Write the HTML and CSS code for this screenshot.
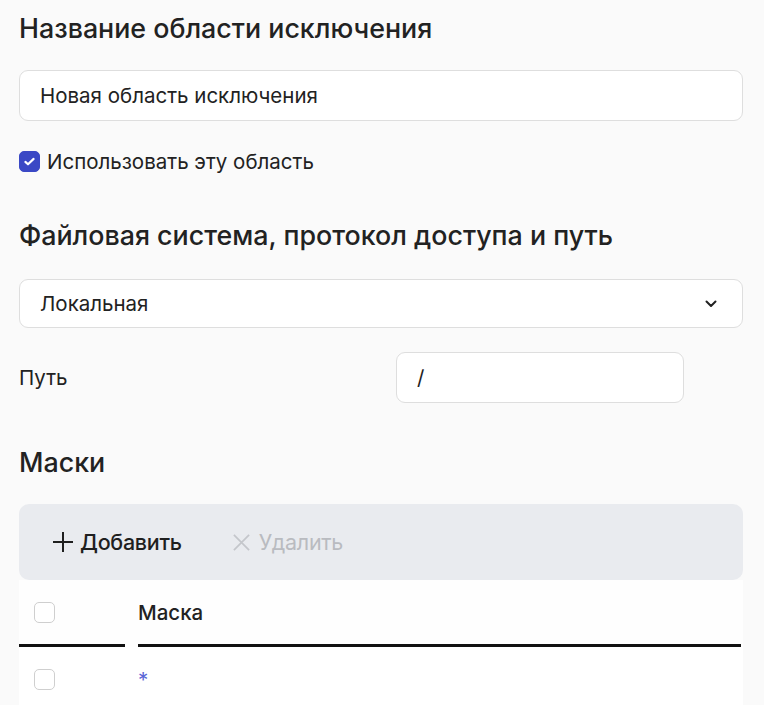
FILE: index.html
```html
<!DOCTYPE html>
<html lang="ru">
<head>
    <meta charset="UTF-8">
    <title>Область исключения</title>
    <link rel="stylesheet" href="styles.css">
</head>
<body>
    <div class="page">
        <h2 class="section-title">Название области исключения</h2>
        <div class="field">
            <input class="text-input" type="text" value="Новая область исключения">
        </div>
        <label class="check-row">
            <span class="checkbox checked">
                <svg viewBox="0 0 20 20" width="15" height="15"><path d="M4.5 10.5l3.5 3.3L15.5 6.5" fill="none" stroke="#fff" stroke-width="2.8" stroke-linecap="round" stroke-linejoin="round"/></svg>
            </span>
            <span class="check-label">Использовать эту область</span>
        </label>

        <h2 class="section-title">Файловая система, протокол доступа и путь</h2>
        <div class="select">
            <span>Локальная</span>
            <svg class="chevron" viewBox="0 0 12 8" width="12" height="8"><path d="M1.5 1.5L6 6l4.5-4.5" fill="none" stroke="#222" stroke-width="2" stroke-linecap="round" stroke-linejoin="round"/></svg>
        </div>
        <div class="path-row">
            <span class="path-label">Путь</span>
            <input class="text-input path-input" type="text" value="/">
        </div>

        <h2 class="section-title">Маски</h2>
        <div class="toolbar">
            <button class="tool-btn">
                <svg viewBox="0 0 22 22" width="22" height="22"><path d="M11 1v20M1 11h20" stroke="#1f1f1f" stroke-width="2" fill="none"/></svg>
                Добавить
            </button>
            <button class="tool-btn disabled">
                <svg viewBox="0 0 20 20" width="19" height="19"><path d="M2 2l16 16M18 2L2 18" stroke="#c4c6cb" stroke-width="1.8" fill="none"/></svg>
                Удалить
            </button>
        </div>

        <div class="table">
            <div class="table-head">
                <div class="cell cell-check"><span class="checkbox"></span></div>
                <div class="cell cell-main">Маска</div>
            </div>
            <div class="table-row">
                <div class="cell cell-check"><span class="checkbox"></span></div>
                <div class="cell cell-main mask-value">*</div>
            </div>
        </div>
    </div>
</body>
</html>
```

FILE: styles.css
```css
* {
    margin: 0;
    padding: 0;
    box-sizing: border-box;
}

body {
    font-family: Inter, 'Noto Sans', sans-serif;
    background: #fafafa;
    color: #222;
    overflow: hidden;
}

.page {
    width: 724px;
    margin-left: 19px;
    padding-top: 11px;
}

.section-title {
    font-size: 26.8px;
    font-weight: 500;
    line-height: 34px;
    color: #222;
}

.field {
    margin-top: 25px;
}

.text-input {
    width: 100%;
    height: 51px;
    border: 1.5px solid #dedede;
    border-radius: 9px;
    background: #fff;
    padding: 0 20px;
    font-family: inherit;
    font-size: 20.5px;
    color: #222;
    outline: none;
}

.check-row {
    display: flex;
    align-items: center;
    gap: 7px;
    margin-top: 28px;
    margin-bottom: 44px;
}

.checkbox {
    width: 21px;
    height: 21px;
    border-radius: 5px;
    border: 1.5px solid #cfcfcf;
    background: #fff;
    display: inline-flex;
    align-items: center;
    justify-content: center;
    flex-shrink: 0;
}

.checkbox.checked {
    background: #3a48c5;
    border-color: #3a48c5;
}

.check-label {
    font-size: 20.5px;
    color: #222;
}

.select {
    margin-top: 27px;
    height: 49px;
    border: 1.5px solid #dedede;
    border-radius: 9px;
    background: #fff;
    padding: 0 25px 0 20px;
    display: flex;
    align-items: center;
    justify-content: space-between;
    font-size: 20.5px;
    color: #222;
}

.path-row {
    display: flex;
    align-items: center;
    margin-top: 24px;
    margin-bottom: 42px;
}

.path-label {
    width: 377px;
    font-size: 20.5px;
    color: #222;
}

.path-input {
    width: 288px;
}

.toolbar {
    margin-top: 25px;
    height: 76px;
    background: #e9ebef;
    border-radius: 10px;
    display: flex;
    align-items: center;
    padding-left: 33px;
    gap: 50px;
}

.tool-btn {
    display: flex;
    align-items: center;
    gap: 6px;
    background: none;
    border: none;
    font-family: inherit;
    font-size: 21.5px;
    font-weight: 500;
    color: #1f1f1f;
    letter-spacing: -0.3px;
}

.tool-btn.disabled {
    color: #b9bbc0;
    font-weight: 400;
    gap: 8px;
}

.table-head,
.table-row {
    display: flex;
    gap: 13px;
}

.table-head {
    height: 67px;
    background: #fefefe;
}

.table-row {
    height: 64px;
    background: #fff;
}

.cell {
    display: flex;
    align-items: center;
    font-size: 20.5px;
    color: #222;
}

.cell-check {
    width: 106px;
    padding-left: 15px;
}

.cell-main {
    flex: 1;
}

.table-head .cell {
    border-bottom: 3px solid #111;
}

.table-head .cell-main {
    margin-right: 2px;
    font-weight: 500;
}

.mask-value {
    color: #5a66d6;
}
```
